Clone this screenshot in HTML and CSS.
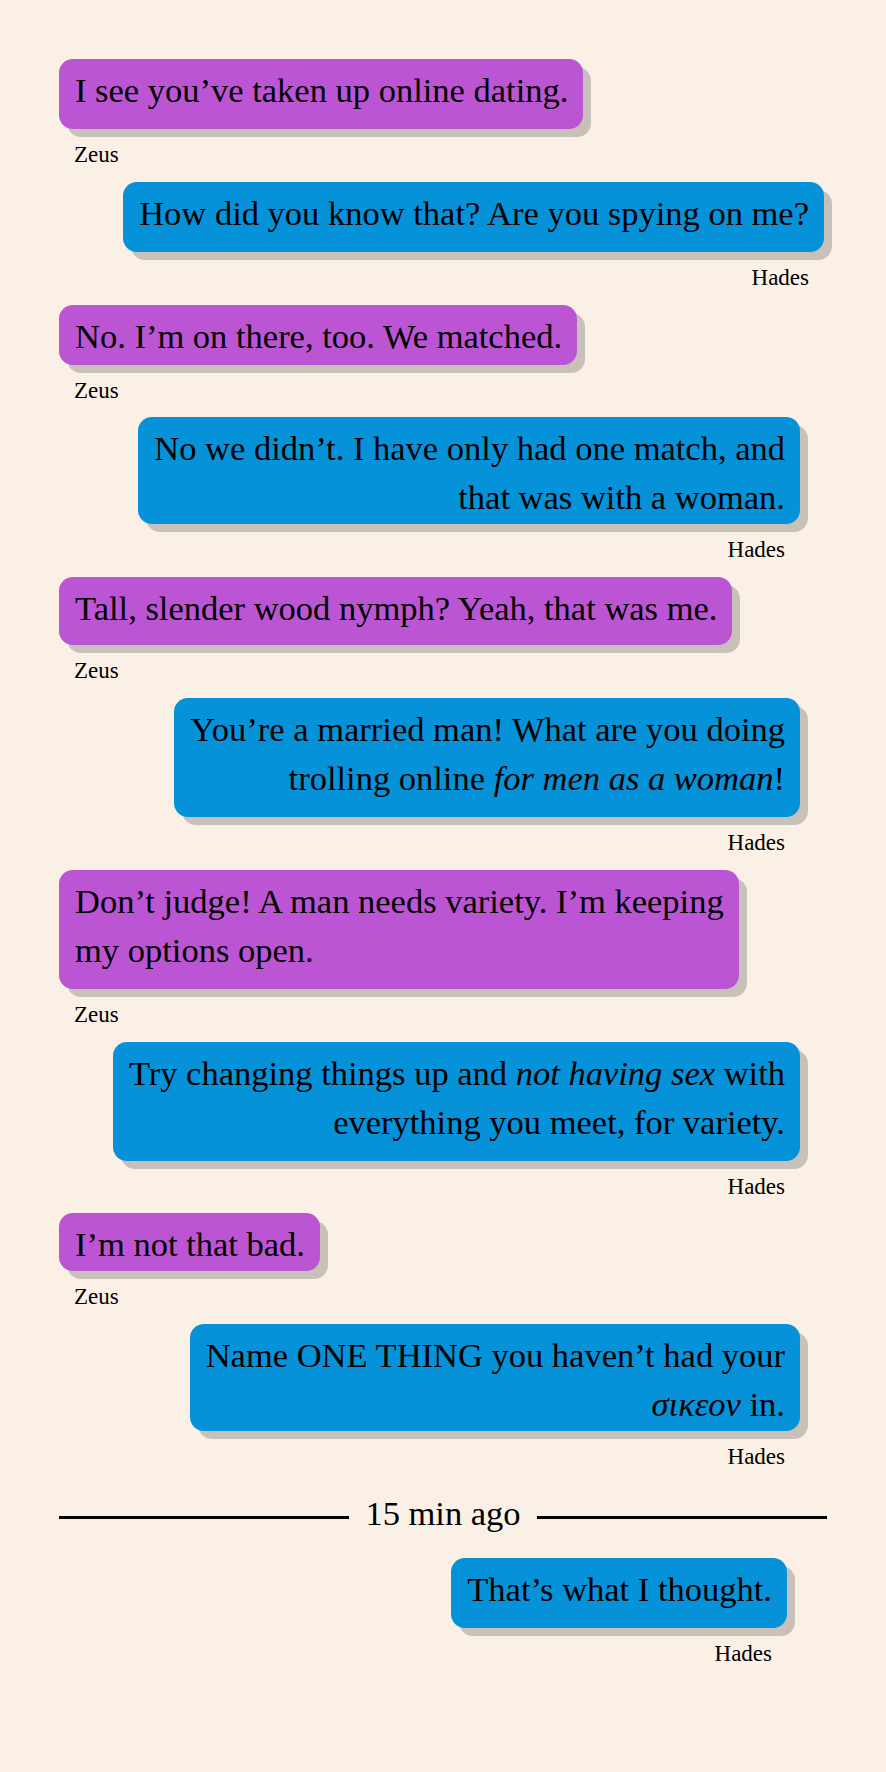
FILE: index.html
```html
<!DOCTYPE html>
<html lang="en">
<head>
<meta charset="utf-8">
<title>Zeus &amp; Hades</title>
<link rel="stylesheet" href="styles.css">
</head>
<body>
<main class="chat">
  <div class="msg">
    <p class="bubble bubble--zeus">I see you’ve taken up online dating.</p>
    <p class="sender">Zeus</p>
  </div>
  <div class="msg msg--hades msg--inset-s">
    <p class="bubble bubble--hades">How did you know that? Are you spying on me?</p>
    <p class="sender">Hades</p>
  </div>
  <div class="msg">
    <p class="bubble bubble--zeus bubble--comma">No. I’m on there, too. We matched.</p>
    <p class="sender">Zeus</p>
  </div>
  <div class="msg msg--hades msg--inset-m">
    <p class="bubble bubble--hades bubble--flat">No we didn’t. I have only had one match, and<br>that was with a woman.</p>
    <p class="sender">Hades</p>
  </div>
  <div class="msg">
    <p class="bubble bubble--zeus bubble--short">Tall, slender wood nymph? Yeah, that was me.</p>
    <p class="sender">Zeus</p>
  </div>
  <div class="msg msg--hades msg--inset-m">
    <p class="bubble bubble--hades">You’re a married man! What are you doing<br>trolling online <em>for men as a woman</em>!</p>
    <p class="sender">Hades</p>
  </div>
  <div class="msg">
    <p class="bubble bubble--zeus">Don’t judge! A man needs variety. I’m keeping<br>my options open.</p>
    <p class="sender">Zeus</p>
  </div>
  <div class="msg msg--hades msg--inset-m">
    <p class="bubble bubble--hades">Try changing things up and <em>not having sex</em> with<br>everything you meet, for variety.</p>
    <p class="sender">Hades</p>
  </div>
  <div class="msg">
    <p class="bubble bubble--zeus bubble--flat">I’m not that bad.</p>
    <p class="sender">Zeus</p>
  </div>
  <div class="msg msg--hades msg--inset-m">
    <p class="bubble bubble--hades bubble--flat">Name ONE THING you haven’t had your<br><em>σικεον</em> in.</p>
    <p class="sender">Hades</p>
  </div>
  <div class="divider">
    <span class="divider__line"></span>
    <span class="divider__text">15 min ago</span>
    <span class="divider__line"></span>
  </div>
  <div class="msg msg--hades msg--inset-l">
    <p class="bubble bubble--hades">That’s what I thought.</p>
    <p class="sender">Hades</p>
  </div>
</main>
</body>
</html>
```
FILE: styles.css
```css
html, body {
  margin: 0;
  background: #faf0e6;
}

body {
  font-family: "Liberation Serif", "Times New Roman", serif;
  color: #000;
}

.chat {
  display: flex;
  flex-direction: column;
  padding: 59px 59px 80px;
}

.msg {
  display: flex;
  flex-direction: column;
  align-items: flex-start;
  margin-bottom: 13.8px;
}

.msg--hades {
  align-items: flex-end;
}

.msg--inset-s { margin-right: 3px; }
.msg--inset-m { margin-right: 27px; }
.msg--inset-l { margin-right: 40px; }

.bubble {
  margin: 0;
  font-size: 34.5px;
  line-height: 49px;
  padding: 7px 15px 14px 16px;
  border-radius: 14px;
  white-space: nowrap;
  box-shadow: 8px 8px 0 #c8c1b9;
}

.bubble em {
  font-style: italic;
}

.bubble--zeus {
  background: #bc55d4;
  text-align: left;
}

.bubble--hades {
  background: #0692d8;
  text-align: right;
}

.bubble--short { padding-bottom: 12px; }
.bubble--comma { padding-bottom: 4px; }
.bubble--flat { padding-bottom: 2px; }

.sender {
  margin: 13px 15px 0;
  font-size: 23px;
  line-height: 26px;
}

.divider {
  display: flex;
  align-items: flex-start;
  gap: 16px;
  margin: 5px 0 20px;
}

.divider__line {
  flex: 1;
  height: 3px;
  margin-top: 27px;
  background: #000;
}

.divider__text {
  font-size: 34.5px;
  line-height: 49px;
}
```
